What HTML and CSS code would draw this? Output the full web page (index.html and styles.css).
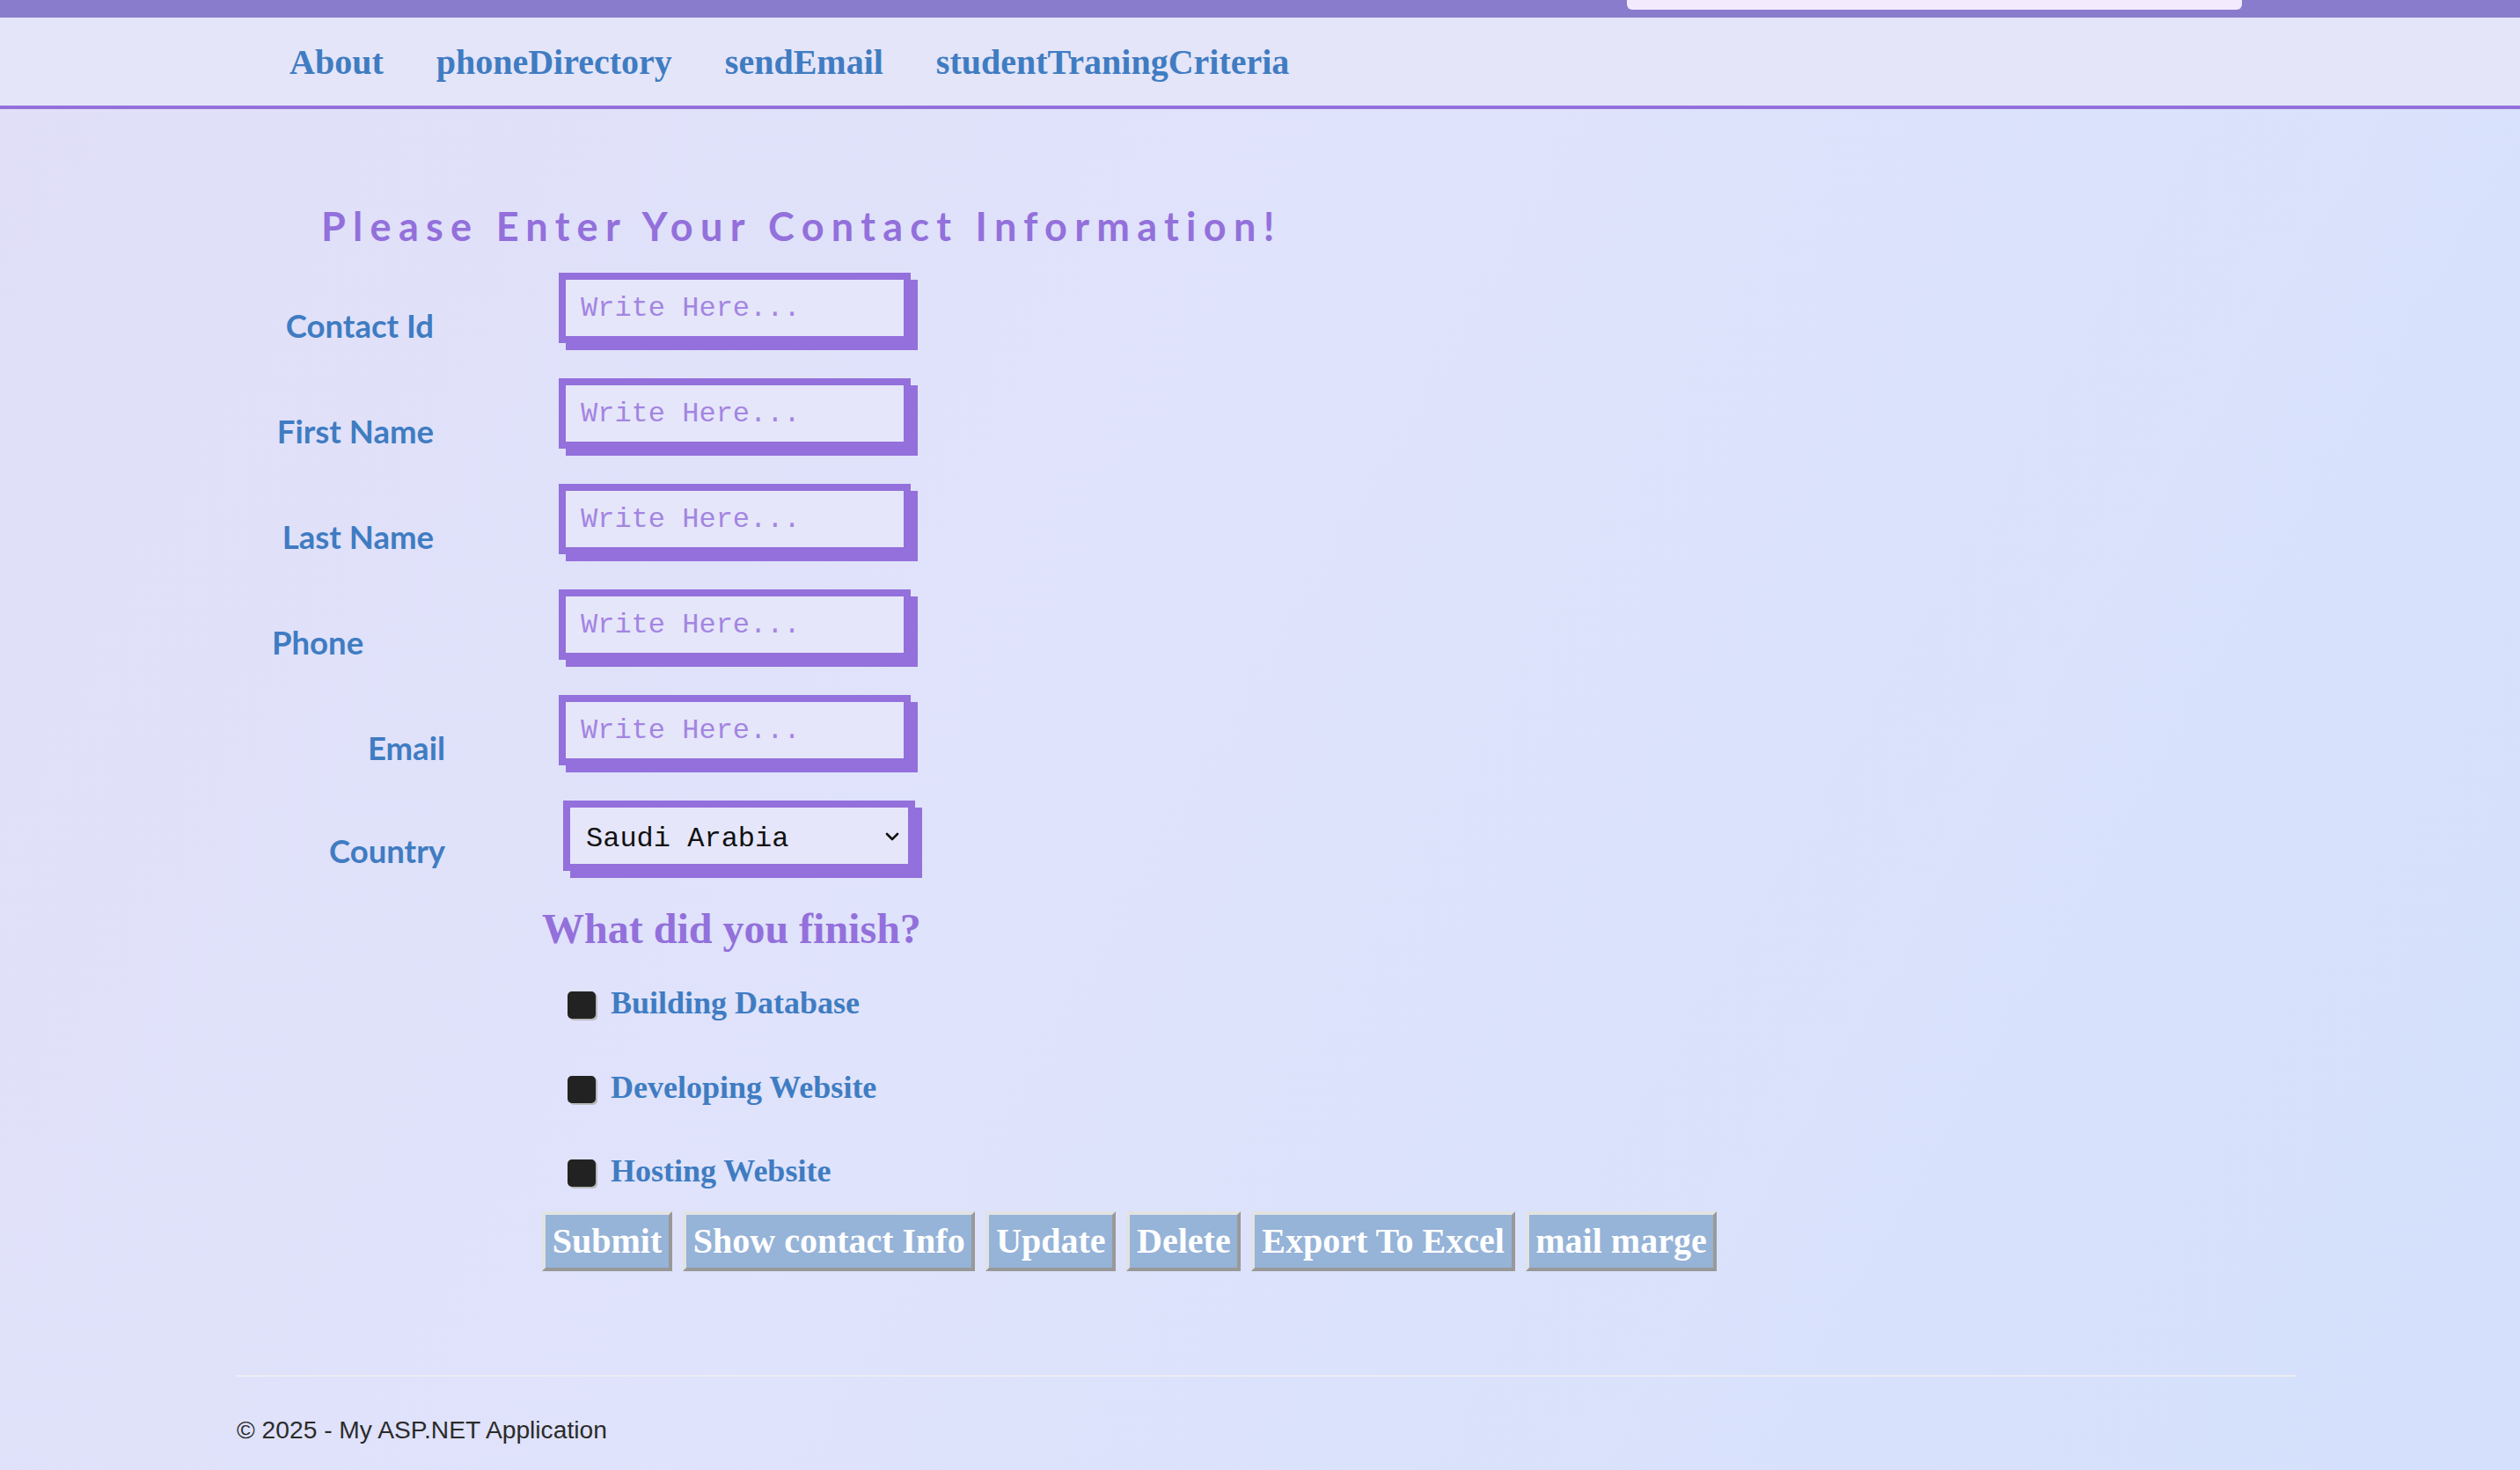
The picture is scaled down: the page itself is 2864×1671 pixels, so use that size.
FILE: index.html
```html
<!DOCTYPE html>
<html lang="en">
<head>
<meta charset="utf-8">
<title>Contact Information</title>
<link rel="stylesheet" href="styles.css">
</head>
<body>
<div class="topbar"><div class="tab"></div></div>
<nav class="nav">
  <a class="nav-link" href="#">About</a>
  <a class="nav-link" href="#">phoneDirectory</a>
  <a class="nav-link" href="#">sendEmail</a>
  <a class="nav-link" href="#">studentTraningCriteria</a>
</nav>
<main class="container">
  <h2 class="title">Please Enter Your Contact Information!</h2>
  <div class="form-grid">
    <label class="lbl lbl-a">Contact Id</label>
    <input class="field" type="text" placeholder="Write Here...">
    <label class="lbl lbl-a">First Name</label>
    <input class="field" type="text" placeholder="Write Here...">
    <label class="lbl lbl-a">Last Name</label>
    <input class="field" type="text" placeholder="Write Here...">
    <label class="lbl lbl-phone">Phone</label>
    <input class="field" type="text" placeholder="Write Here...">
    <label class="lbl lbl-b">Email</label>
    <input class="field" type="text" placeholder="Write Here...">
    <label class="lbl lbl-b lbl-country">Country</label>
    <div class="select-wrap">
      <select class="field select">
        <option>Saudi Arabia</option>
        <option>Egypt</option>
        <option>Jordan</option>
      </select>
      <svg class="chev" width="16" height="10" viewBox="0 0 16 10"><path d="M2 2 L8 8 L14 2" fill="none" stroke="#111" stroke-width="2.6" stroke-linecap="round" stroke-linejoin="round"/></svg>
    </div>
  </div>
  <div class="finish">
    <h3 class="q">What did you finish?</h3>
    <div class="checks">
      <label class="check"><input type="checkbox" class="cb"><span>Building Database</span></label>
      <label class="check"><input type="checkbox" class="cb"><span>Developing Website</span></label>
      <label class="check"><input type="checkbox" class="cb"><span>Hosting Website</span></label>
    </div>
    <div class="buttons">
      <button class="btn">Submit</button>
      <button class="btn">Show contact Info</button>
      <button class="btn">Update</button>
      <button class="btn">Delete</button>
      <button class="btn">Export To Excel</button>
      <button class="btn">mail marge</button>
    </div>
  </div>
  <hr class="rule">
  <footer class="footer">© 2025 - My ASP.NET Application</footer>
</main>
</body>
</html>
```
FILE: styles.css
```css
html, body {
  margin: 0;
  padding: 0;
}
body {
  min-height: 1671px;
  background: linear-gradient(120deg, #e1dff8 0%, #dfe3fb 45%, #d4e0fc 100%);
  font-family: "Liberation Sans", Arial, sans-serif;
  color: #333;
}
.topbar {
  height: 20px;
  background: #8a7ccc;
  display: flex;
}
.tab {
  margin-left: 1849px;
  width: 699px;
  height: 11px;
  background: #f3ebfd;
  border-radius: 0 0 6px 6px;
}
.nav {
  height: 100px;
  background: #e4e5f8;
  border-bottom: 4px solid #9370db;
  display: flex;
  align-items: center;
  gap: 60px;
  padding-left: 329px;
}
.nav-link {
  font-family: "Liberation Serif", "Times New Roman", serif;
  font-weight: bold;
  font-size: 40px;
  color: #3f7cc2;
  text-decoration: none;
}
.container {
  margin-left: 269px;
  width: 2340px;
}
.title {
  margin: 107px 0 0 96px;
  font-family: Lato, "Noto Sans", sans-serif;
  font-weight: bold;
  font-size: 45px;
  line-height: 52px;
  letter-spacing: 8.3px;
  color: #9370db;
  white-space: nowrap;
}
.form-grid {
  margin-top: 27px;
  display: grid;
  grid-template-columns: 366px 420px;
  grid-auto-rows: 80px;
  row-gap: 40px;
}
.lbl {
  font-family: Lato, "Noto Sans", sans-serif;
  font-weight: bold;
  font-size: 36.5px;
  line-height: 36px;
  color: #3f7cc2;
  padding-top: 42px;
  white-space: nowrap;
}
.lbl-a {
  text-align: right;
  padding-right: 142px;
}
.lbl-phone {
  text-align: left;
  padding-left: 40px;
}
.lbl-b {
  text-align: right;
  padding-right: 129px;
}
.lbl-country {
  padding-top: 39px;
}
.field {
  box-sizing: border-box;
  width: 400px;
  height: 80px;
  margin: 0;
  border: 8px solid #9370db;
  box-shadow: 8px 8px 0 #9370db;
  background: #e6e6fa;
  padding: 0 0 0 17px;
  font-family: "Liberation Mono", "Courier New", monospace;
  font-size: 32px;
  color: #111;
  outline: none;
}
.field::placeholder {
  color: #a385e2;
}
.select-wrap {
  position: relative;
  margin-left: 5px;
  width: 400px;
  height: 80px;
}
.select {
  appearance: none;
  -webkit-appearance: none;
  border-radius: 0;
  padding: 6px 0 0 18px;
  color: #111;
}
.chev {
  position: absolute;
  left: 366px;
  top: 36px;
}
.finish {
  margin-left: 347px;
}
.q {
  margin: 38px 0 0 0;
  font-family: "Liberation Serif", "Times New Roman", serif;
  font-weight: bold;
  font-size: 48px;
  color: #9370db;
}
.checks {
  margin-top: 36px;
  margin-left: 29px;
  display: flex;
  flex-direction: column;
  gap: 53.6px;
}
.check {
  display: flex;
  align-items: flex-start;
  gap: 17px;
  font-family: "Liberation Serif", "Times New Roman", serif;
  font-weight: bold;
  font-size: 36px;
  color: #3f7cc2;
}
.cb {
  appearance: none;
  -webkit-appearance: none;
  margin: 8px 0 0 0;
  width: 32px;
  height: 31px;
  background: #222;
  border-radius: 5px;
  box-shadow: 2px 2px 0 #b9b9bd;
  flex: none;
}
.buttons {
  margin-top: 25px;
  display: flex;
  gap: 12px;
}
.btn {
  font-family: "Liberation Serif", "Times New Roman", serif;
  font-weight: bold;
  font-size: 40px;
  color: #fff;
  background: #96b3d8;
  border-style: solid;
  border-width: 4px;
  border-color: #e2e2e2 #999 #999 #e2e2e2;
  padding: 7px 7.75px;
  margin: 0;
  line-height: 46px;
}
.rule {
  margin: 118px 0 0 0;
  border: 0;
  border-top: 2px solid #ececf2;
  height: 0;
}
.footer {
  margin-top: 44px;
  font-size: 28.2px;
  color: #2b2b2b;
}
```
